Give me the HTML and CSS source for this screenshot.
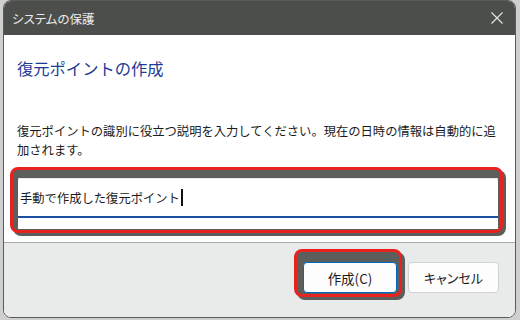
FILE: index.html
```html
<!DOCTYPE html>
<html lang="ja">
<head>
  <meta charset="UTF-8">
  <title>システムの保護</title>
  <link rel="stylesheet" href="styles.css">
</head>
<body>
  <div class="window">
    <div class="titlebar">
      <span class="title">システムの保護</span>
      <svg class="close" width="12" height="12" viewBox="0 0 12 12">
        <path d="M0.5 0.5 L11.5 11.5 M11.5 0.5 L0.5 11.5" stroke="#e6e6e6" stroke-width="1.1" fill="none"/>
      </svg>
    </div>

    <div class="content">
      <h1>復元ポイントの作成</h1>
      <p class="desc">復元ポイントの識別に役立つ説明を入力してください。現在の日時の情報は自動的に追加されます。</p>

      <div class="mark mark-field">
        <div class="field">
          <div class="field-box">
            <span class="field-text">手動で作成した復元ポイント</span><span class="caret"></span>
          </div>
        </div>
      </div>
    </div>

    <div class="footer">
      <div class="mark mark-button">
        <button class="btn btn-primary">作成(C)</button>
      </div>
      <button class="btn btn-cancel">キャンセル</button>
    </div>
  </div>
</body>
</html>
```

FILE: styles.css
```css
:root {
  --titlebar: #4b4e4b;
  --heading: #1e3b96;
  --text: #1b1b1b;
  --footer: #e9eaea;
  --mark: #e8221f;
  --mark-shadow: #5c5e5c;
  --accent: #0067c0;
}

html, body {
  margin: 0;
  padding: 0;
}

body {
  background-color: #cfcfcf;
  font-family: "Noto Sans CJK JP", "Noto Sans", sans-serif;
  color: var(--text);
  width: 520px;
  height: 320px;
  overflow: hidden;
}

.window {
  margin-left: 3px;
  width: 511px;
  height: 316px;
  border: 1px solid #5a5c5a;
  border-radius: 8px;
  background-color: white;
  display: flex;
  flex-direction: column;
  overflow: hidden;
}

.titlebar {
  height: 34px;
  flex: none;
  background-color: var(--titlebar);
  display: flex;
  align-items: center;
  justify-content: space-between;
  padding: 0 12px 0 8px;
}

.title {
  color: #ececec;
  font-size: 12.5px;
  font-feature-settings: "palt";
}

.close {
  display: block;
  margin-bottom: 1px;
}

.content {
  flex: 1;
  padding: 0 12px 0 6px;
}

h1 {
  margin: 21px 0 0 7px;
  font-size: 16.3px;
  line-height: 24px;
  font-weight: 400;
  color: var(--heading);
}

.desc {
  margin: 42px 0 0 7px;
  font-size: 12.3px;
  line-height: 19px;
}

.mark {
  border: 3px solid var(--mark);
  border-radius: 8px;
  background-color: var(--mark-shadow);
  box-shadow: 3px 3px 0 var(--mark-shadow);
}

.mark-field {
  margin-top: 7px;
  padding: 8px 2px 1px 5px;
}

.field {
  background-color: white;
  border-radius: 3px 3px 0 0;
  height: 51px;
}

.field-box {
  height: 37px;
  border-top: 1px solid #ececec;
  border-bottom: 2px solid #1c4fa0;
  display: flex;
  align-items: center;
  padding-left: 2px;
  font-size: 12.3px;
}

.caret {
  display: inline-block;
  width: 2px;
  height: 17px;
  margin-left: 1px;
  background-color: #111;
}

.footer {
  height: 68px;
  flex: none;
  background-color: var(--footer);
  border-top: 1px solid #a9abab;
  display: flex;
  justify-content: flex-end;
  align-items: flex-start;
  gap: 6px;
  padding: 6px 16px 0 0;
}

.mark-button {
  padding: 10px 2px 1px 6px;
}

.btn {
  display: block;
  width: 94px;
  height: 31px;
  border-radius: 4px;
  font-family: "Noto Sans CJK JP", "Noto Sans", sans-serif;
  font-size: 13.5px;
  color: var(--text);
  background-color: #fdfdfd;
  padding: 0;
}

.btn-primary {
  border: 1px solid var(--accent);
}

.btn-cancel {
  margin-top: 13px;
  width: 91px;
  border: 1px solid #d2d2d2;
  font-size: 13px;
  font-feature-settings: "palt";
}
```
